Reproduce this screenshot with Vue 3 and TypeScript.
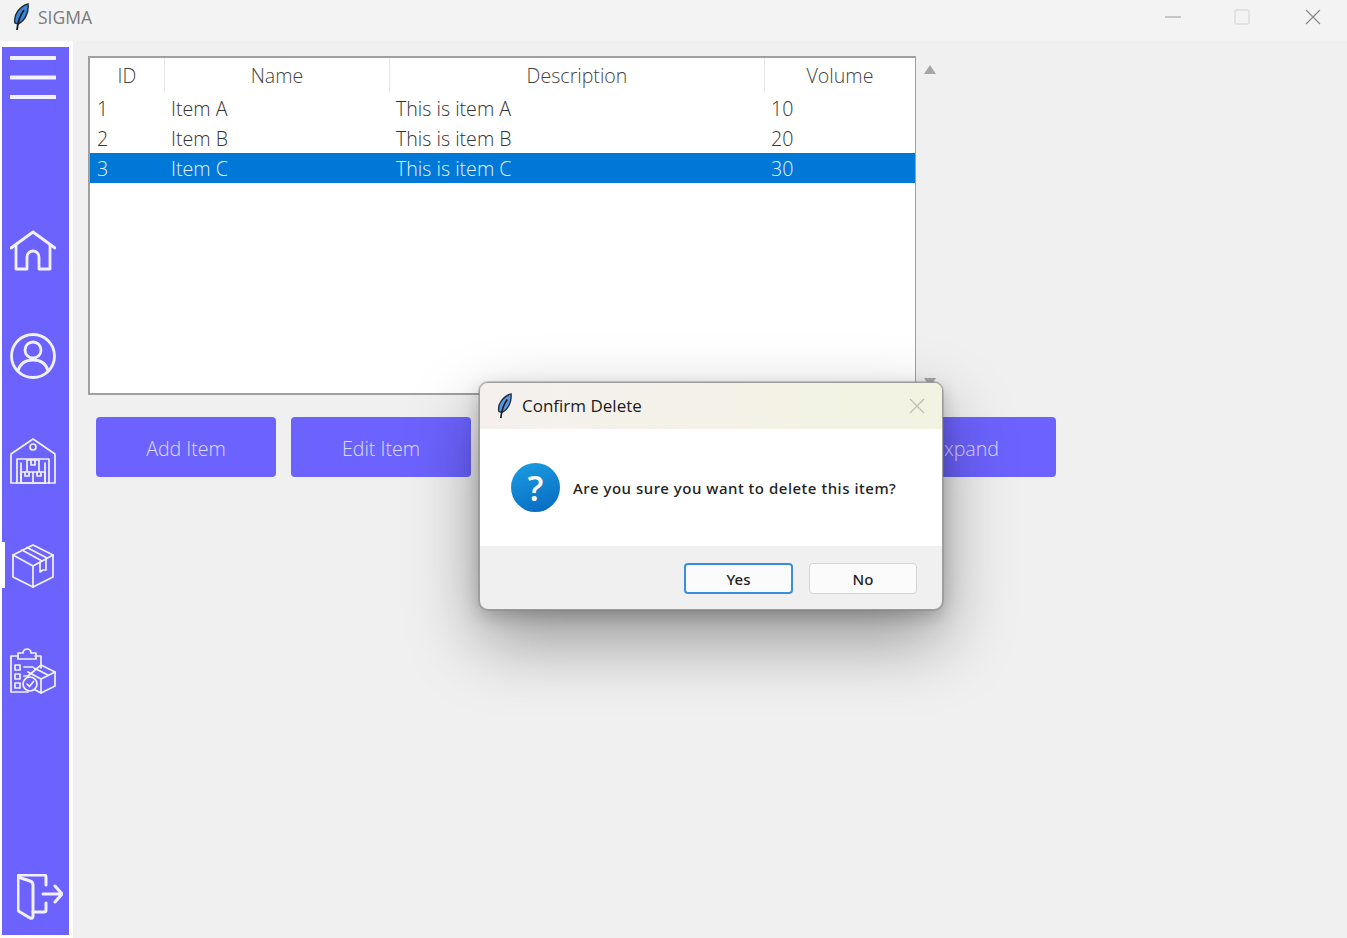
<template>
  <div class="window">
    <header class="titlebar">
      <svg class="feather" viewBox="0 0 16 28">
        <path d="M2 20C0 12 7 3 15 1C16 9 12 18 5 21Z" fill="#3f86d8" stroke="#22303f" stroke-width="1.500" />
        <path d="M11 7C8 11 5 17 4 27" fill="none" stroke="#1a1f26" stroke-width="1.800" />
      </svg>
      <span class="app-name">SIGMA</span>
      <div class="win-controls">
        <svg width="16" height="16" viewBox="0 0 16 16"><path d="M0 8H16" stroke="#999" /></svg>
        <svg width="16" height="16" viewBox="0 0 16 16"><rect x="1" y="1" width="14" height="14" rx="2" fill="none" stroke="#ddd" stroke-width="1.5" /></svg>
        <svg width="16" height="16" viewBox="0 0 16 16"><path d="M1 1L15 15M15 1L1 15" stroke="#8a8a8a" stroke-width="1.2" /></svg>
      </div>
    </header>

    <div class="content">
      <aside class="sidebar">
        <div class="rail">
          <svg class="ic menu" viewBox="0 0 46 46"><path d="M1 2H45M1 21.500H45M1 41H45" /></svg>

          <div class="nav">
            <svg class="ic" viewBox="0 0 46 46">
              <path d="M1 20L23 4L45 20" />
              <path d="M6 17V41H17V29A6 6 0 0 1 29 29V41H40V17" />
            </svg>
            <svg class="ic" viewBox="0 0 46 46">
              <circle cx="23" cy="23" r="21.500" />
              <circle cx="23" cy="17" r="8" />
              <path d="M8 38C10 30 16 27 23 27C30 27 36 30 38 38" />
            </svg>
            <svg class="ic thin" viewBox="0 0 46 46">
              <path d="M1 45V16L23 1L45 16V45Z" />
              <circle cx="23" cy="9" r="3" />
              <path d="M7 45V21H39V45" />
              <path d="M11 25V45M35 25V45" />
              <path d="M17 22H29V34H17ZM11 34H23V45H11ZM23 34H35V45H23Z" />
              <path d="M21 22V27H25V22M15 34V38H19V34M27 34V38H31V34" />
            </svg>
            <div class="active-item">
              <svg class="ic thin" viewBox="0 -1 46 46">
                <path d="M23 1L43 11V33L23 43L3 33V11Z" />
                <path d="M3 11L23 22L43 11M23 22V43" />
                <path d="M12 6L32 17M17 3.500L37 14" />
                <path d="M30 18V28L33 26L36 26V15" />
              </svg>
            </div>
            <svg class="ic thin" viewBox="0 0 46 46">
              <path d="M25 8H31V20M18 44H1V8H8" />
              <path d="M8 5H13A4 4 0 0 1 21 5H26V11H8Z" />
              <path d="M5 17H10V22H5ZM5 26H10V31H5ZM5 35H10V40H5ZM14 19H23M14 28H18" />
              <path d="M31 17L45 24V38L31 45L18 38V28Z" />
              <path d="M18 24L31 31L45 24M31 31V45" />
              <path d="M24 20L38 27" />
              <circle cx="20" cy="36" r="7" fill="#6c63ff" />
              <path d="M17 36L19.500 38.500L23.500 33.500" />
            </svg>
          </div>

          <svg class="ic exit" viewBox="0 0 46 46">
            <path d="M1 3Q1 1 3 1H27Q29 1 29 3V11M29 29V36Q29 38 27 38H16" />
            <path d="M1 3L13 7Q16 8 16 11V42Q16 45 13 44L3 38Q1 37 1 35Z" />
            <path d="M26 20H45M38 12L45 20L38 28" />
          </svg>
        </div>
      </aside>

      <main class="main">
        <div class="table-row">
          <div class="table">
            <div class="row head">
              <div v-for="c in columns" :key="c" class="th">{{ c }}</div>
            </div>
            <div
              v-for="item in items"
              :key="item.id"
              class="row"
              :class="{ selected: item.id === selectedId }"
            >
              <div class="td">{{ item.id }}</div>
              <div class="td">{{ item.name }}</div>
              <div class="td">{{ item.description }}</div>
              <div class="td">{{ item.volume }}</div>
            </div>
          </div>
          <div class="scrollbar">
            <span class="arrow up"></span>
            <span class="arrow down"></span>
          </div>
        </div>

        <div class="actions">
          <button v-for="(b, i) in buttons" :key="i" class="action">{{ b }}</button>
        </div>
      </main>
    </div>

    <div class="dialog">
      <div class="dialog-title">
        <svg class="feather small" viewBox="0 0 16 28">
          <path d="M2 20C0 12 7 3 15 1C16 9 12 18 5 21Z" fill="#5a96e0" stroke="#22303f" stroke-width="1.500" />
          <path d="M11 7C8 11 5 17 4 27" fill="none" stroke="#1a1f26" stroke-width="1.800" />
        </svg>
        <span>Confirm Delete</span>
        <svg class="dialog-close" width="16" height="16" viewBox="0 0 16 16"><path d="M1 1L15 15M15 1L1 15" stroke="#bdbdb5" stroke-width="1.200" /></svg>
      </div>
      <div class="dialog-body">
        <div class="question">?</div>
        <p class="message">Are you sure you want to delete this item?</p>
      </div>
      <div class="dialog-footer">
        <button class="dlg-btn primary">Yes</button>
        <button class="dlg-btn">No</button>
      </div>
    </div>
  </div>
</template>

<script setup lang="ts">
const columns = ['ID', 'Name', 'Description', 'Volume']

const items = [
  { id: 1, name: 'Item A', description: 'This is item A', volume: 10 },
  { id: 2, name: 'Item B', description: 'This is item B', volume: 20 },
  { id: 3, name: 'Item C', description: 'This is item C', volume: 30 },
]
const selectedId = 3

// the two middle buttons sit behind the dialog, their labels can't be read
const buttons = ['Add Item', 'Edit Item', '', '', 'Expand']
</script>

<style>
html,
body {
  margin: 0;
  background: #f0f0f0;
}
</style>

<style scoped>
.window {
  position: relative;
  width: 1347px;
  height: 938px;
  overflow: hidden;
  display: flex;
  flex-direction: column;
  background: #f0f0f0;
  font-family: "Open Sans", "Noto Sans", sans-serif;
}
.titlebar {
  height: 41px;
  flex: none;
  box-sizing: border-box;
  display: flex;
  align-items: center;
  background: #f3f3f3;
  padding: 0 0 7px 13px;
}
.feather {
  width: 16px;
  height: 28px;
}
.app-name {
  margin-left: 9px;
  font-size: 17.500px;
  color: #7a7a7a;
}
.win-controls {
  margin-left: auto;
  margin-right: 26px;
  display: flex;
}
.win-controls svg + svg {
  margin-left: 53px;
}
.win-controls svg:last-child {
  margin-left: 55px;
}
.content {
  flex: 1;
  display: flex;
  min-height: 0;
}
.sidebar {
  width: 73px;
  flex: none;
  background: #fff;
  padding: 6px 4px 3px 2px;
  box-sizing: border-box;
}
.rail {
  height: 100%;
  background: #6c63ff;
  display: flex;
  flex-direction: column;
  align-items: center;
  padding: 9px 0 15px;
  box-sizing: border-box;
}
.ic {
  width: 46px;
  height: 46px;
  flex: none;
  fill: none;
  stroke: #f2f1ff;
  stroke-width: 2.800;
  stroke-linecap: round;
  stroke-linejoin: round;
  margin-left: -6px;
  filter: blur(0.4px);
}
.ic.menu {
  stroke-width: 4;
}
.ic.thin {
  stroke-width: 1.700;
}
.nav {
  margin-top: 126px;
  display: flex;
  flex-direction: column;
  gap: 59px;
  width: 100%;
  align-items: center;
}
.active-item {
  width: 100%;
  height: 46px;
  display: flex;
  justify-content: center;
  position: relative;
}
.active-item::before {
  content: "";
  position: absolute;
  left: 0;
  top: -1px;
  width: 3px;
  height: 46px;
  background: #fff;
}
.exit {
  margin-top: auto;
  margin-left: 9px;
  stroke-width: 3;
}
.main {
  flex: 1;
  padding: 15px 0 0 15px;
}
.table-row {
  display: flex;
}
.table {
  width: 828px;
  height: 339px;
  box-sizing: border-box;
  border: 2px solid #a0a0a0;
  border-right-width: 1px;
  background: #fff;
}
.row {
  display: grid;
  grid-template-columns: 74px 225px 375px 1fr;
  height: 30px;
  line-height: 30px;
  font-size: 19.600px;
  font-weight: 300;
  color: #333;
}
.row.head {
  height: 35px;
  line-height: 35px;
  color: #444;
}
.th {
  text-align: center;
  border-left: 1px solid #e8e8e8;
}
.th:first-child {
  border-left: 0;
}
.td {
  padding-left: 7px;
  line-height: 32px;
}
.row.selected {
  background: #0078d7;
  color: #e6f0fa;
}
.scrollbar {
  width: 28px;
  height: 339px;
  position: relative;
}
.arrow {
  position: absolute;
  left: 8px;
  width: 0;
  height: 0;
  border-left: 6px solid transparent;
  border-right: 6px solid transparent;
}
.arrow.up {
  top: 9px;
  border-bottom: 9px solid #a6a6a6;
}
.arrow.down {
  bottom: 8px;
  border-top: 9px solid #a6a6a6;
}
.actions {
  margin-top: 22px;
  padding-left: 8px;
  display: flex;
  gap: 15px;
}
.action {
  width: 180px;
  height: 60px;
  border: 0;
  border-radius: 4px;
  background: #6c63ff;
  color: #dedbff;
  font-family: inherit;
  font-size: 19.600px;
  font-weight: 300;
  padding: 3px 0 0;
}
.dialog {
  position: absolute;
  left: 479px;
  top: 382px;
  width: 464px;
  height: 228px;
  box-sizing: border-box;
  border: 1px solid #9c9c9c;
  border-radius: 9px;
  overflow: hidden;
  background: #f0f0f0;
  display: flex;
  flex-direction: column;
  box-shadow:
    0 0 0 1px rgba(120, 120, 120, 0.35),
    0 30px 70px rgba(0, 0, 0, 0.38),
    0 6px 18px rgba(0, 0, 0, 0.2);
}
.dialog-title {
  height: 46px;
  flex: none;
  box-sizing: border-box;
  display: flex;
  align-items: center;
  padding: 0 0 1px 17px;
  background: linear-gradient(90deg, #f5f0ee, #f2f3e1);
  font-size: 17px;
  color: #1c1c1c;
}
.feather.small {
  width: 15px;
  height: 26px;
  margin-right: 10px;
}
.dialog-close {
  margin-left: auto;
  margin-right: 17px;
}
.dialog-body {
  height: 117px;
  flex: none;
  background: #fff;
  display: flex;
  align-items: center;
  padding-left: 31px;
  box-sizing: border-box;
}
.question {
  width: 49px;
  height: 49px;
  border-radius: 50%;
  background: linear-gradient(160deg, #1c9fe2, #0768c0);
  color: #fff;
  font-size: 35px;
  font-weight: 600;
  line-height: 49px;
  text-align: center;
  flex: none;
}
.message {
  margin: 1px 0 0 13px;
  font-family: "Noto Sans", sans-serif;
  font-weight: 500;
  font-size: 15px;
  letter-spacing: 0.520px;
  color: #222;
  white-space: nowrap;
}
.dialog-footer {
  flex: 1;
  display: flex;
  justify-content: flex-end;
  gap: 16px;
  padding: 17px 25px 0 0;
}
.dlg-btn {
  width: 108px;
  height: 31px;
  box-sizing: border-box;
  border: 1px solid #d4d4d4;
  border-radius: 4px;
  background: #fbfbfb;
  font-family: "Noto Sans", sans-serif;
  font-weight: 500;
  font-size: 15px;
  color: #222;
  padding: 0;
}
.dlg-btn.primary {
  width: 109px;
  border: 2px solid #3a8fdc;
}
</style>
